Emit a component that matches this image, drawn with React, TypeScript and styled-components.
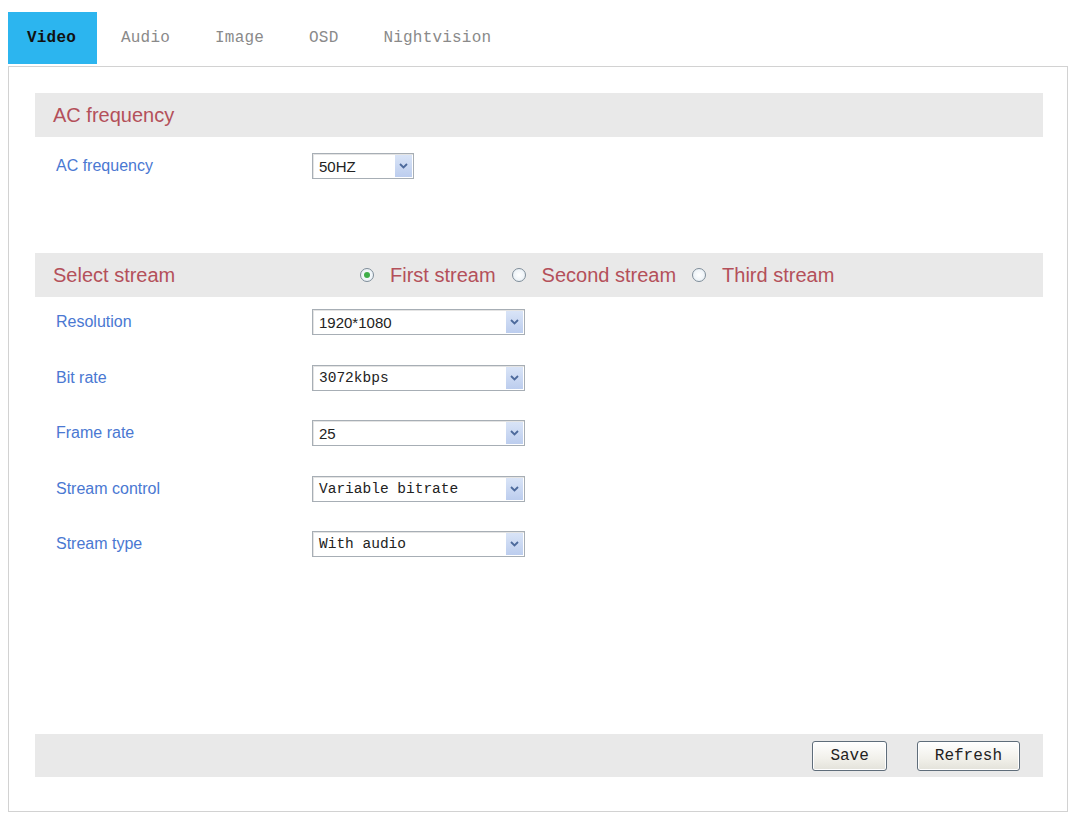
import React from 'react';
import styled, { createGlobalStyle } from 'styled-components';

const GlobalStyle = createGlobalStyle`
  body {
    margin: 0;
    background: #fff;
    font-family: "Liberation Sans", Arial, sans-serif;
  }
`;

const Page = styled.div`
  padding: 12px 0 0 8px;
  width: 1060px;
`;

const TabBar = styled.div`
  display: flex;
  height: 52px;
`;

const Tab = styled.div<{ $active?: boolean }>`
  display: flex;
  align-items: center;
  padding: 0 21px 0 19px;
  margin-right: 5px;
  font-family: "Liberation Mono", "DejaVu Sans Mono", monospace;
  font-size: 16px;
  letter-spacing: 0.2px;
  font-weight: ${(p) => (p.$active ? 700 : 400)};
  color: ${(p) => (p.$active ? '#111' : '#8a8a8a')};
  background: ${(p) => (p.$active ? '#2cb5ef' : 'transparent')};
`;

const Panel = styled.div`
  margin-top: 2px;
  height: 746px;
  box-sizing: border-box;
  border: 1px solid #d2d2d2;
  padding: 26px 24px 34px 26px;
  display: flex;
  flex-direction: column;
`;

const SectionHeader = styled.div<{ $gap?: number }>`
  display: flex;
  align-items: center;
  height: 44px;
  margin-top: ${(p) => p.$gap ?? 0}px;
  padding-left: 18px;
  background: #e9e9e9;
  color: #b4505a;
  font-size: 20px;
`;

const HeaderTitle = styled.div`
  width: 307px;
`;

const RadioGroup = styled.div`
  display: flex;
  align-items: center;
`;

const RadioItem = styled.label`
  display: flex;
  align-items: center;
  margin-right: 16px;
  cursor: pointer;
`;

const RadioCircle = styled.span<{ $checked?: boolean }>`
  width: 14px;
  height: 14px;
  box-sizing: border-box;
  border-radius: 50%;
  border: 1px solid #7e8d99;
  background: radial-gradient(circle, #fff 0%, #e3ecf3 100%);
  margin-right: 16px;
  display: flex;
  align-items: center;
  justify-content: center;

  &::after {
    content: '';
    width: 6px;
    height: 6px;
    border-radius: 50%;
    background: ${(p) => (p.$checked ? '#3fae4a' : 'transparent')};
  }
`;

const Rows = styled.div<{ $top?: number }>`
  display: flex;
  flex-direction: column;
  gap: 5.5px;
  margin-top: ${(p) => p.$top ?? 0}px;
`;

const FieldRow = styled.div`
  display: flex;
  align-items: center;
  height: 50px;
  padding-left: 21px;
`;

const FieldLabel = styled.div`
  width: 256px;
  color: #4a78d2;
  font-size: 16px;
`;

const SelectBox = styled.div<{ $width: number; $mono?: boolean }>`
  display: flex;
  align-items: stretch;
  width: ${(p) => p.$width}px;
  height: 26px;
  box-sizing: border-box;
  border: 1px solid #a7aeb5;
  box-shadow: inset 1px 1px 0 #e4e4e4;
  background: #fff;
  font-family: ${(p) =>
    p.$mono ? '"Liberation Mono", "DejaVu Sans Mono", monospace' : '"Liberation Sans", Arial, sans-serif'};
  font-size: ${(p) => (p.$mono ? '14.5px' : '15px')};
  color: #222;
`;

const SelectValue = styled.div`
  flex: 1;
  display: flex;
  align-items: center;
  padding-left: 6px;
  white-space: nowrap;
`;

const SelectArrow = styled.div`
  width: 17px;
  margin: 1px;
  display: flex;
  align-items: center;
  justify-content: center;
  background: linear-gradient(#d9e4f7, #bccdee);
`;

const BottomBar = styled.div`
  margin-top: auto;
  height: 43px;
  display: flex;
  align-items: center;
  justify-content: flex-end;
  gap: 30px;
  padding-right: 23px;
  background: #e9e9e9;
`;

const Button = styled.button`
  height: 30px;
  padding: 0 17px;
  border: 1px solid #5f6d7a;
  border-radius: 3px;
  background: linear-gradient(#ffffff, #f1f0ea 60%, #e3e2da);
  box-shadow: inset 0 0 0 1px #fff;
  font-family: "Liberation Mono", "DejaVu Sans Mono", monospace;
  font-size: 16px;
  color: #222;
  cursor: pointer;
`;

const Chevron = () => (
  <svg width="9" height="6" viewBox="0 0 9 6">
    <path d="M1 1 L4.5 4.5 L8 1" fill="none" stroke="#4d6a9c" strokeWidth="1.8" />
  </svg>
);

const Select = ({ value, width, mono }: { value: string; width: number; mono?: boolean }) => (
  <SelectBox $width={width} $mono={mono}>
    <SelectValue>{value}</SelectValue>
    <SelectArrow>
      <Chevron />
    </SelectArrow>
  </SelectBox>
);

const tabs = ['Video', 'Audio', 'Image', 'OSD', 'Nightvision'];

const streamFields = [
  { label: 'Resolution', value: '1920*1080' },
  { label: 'Bit rate', value: '3072kbps', mono: true },
  { label: 'Frame rate', value: '25' },
  { label: 'Stream control', value: 'Variable bitrate', mono: true },
  { label: 'Stream type', value: 'With audio', mono: true },
];

const streams = ['First stream', 'Second stream', 'Third stream'];

export default function App(): JSX.Element {
  return (
    <>
      <GlobalStyle />
      <Page>
        <TabBar>
          {tabs.map((t, i) => (
            <Tab key={t} $active={i === 0}>
              {t}
            </Tab>
          ))}
        </TabBar>
        <Panel>
          <SectionHeader>AC frequency</SectionHeader>
          <Rows $top={4}>
            <FieldRow>
              <FieldLabel>AC frequency</FieldLabel>
              <Select value="50HZ" width={102} />
            </FieldRow>
          </Rows>

          <SectionHeader $gap={62}>
            <HeaderTitle>Select stream</HeaderTitle>
            <RadioGroup>
              {streams.map((s, i) => (
                <RadioItem key={s}>
                  <RadioCircle $checked={i === 0} />
                  {s}
                </RadioItem>
              ))}
            </RadioGroup>
          </SectionHeader>
          <Rows>
            {streamFields.map((f) => (
              <FieldRow key={f.label}>
                <FieldLabel>{f.label}</FieldLabel>
                <Select value={f.value} width={213} mono={f.mono} />
              </FieldRow>
            ))}
          </Rows>

          <BottomBar>
            <Button>Save</Button>
            <Button>Refresh</Button>
          </BottomBar>
        </Panel>
      </Page>
    </>
  );
}
